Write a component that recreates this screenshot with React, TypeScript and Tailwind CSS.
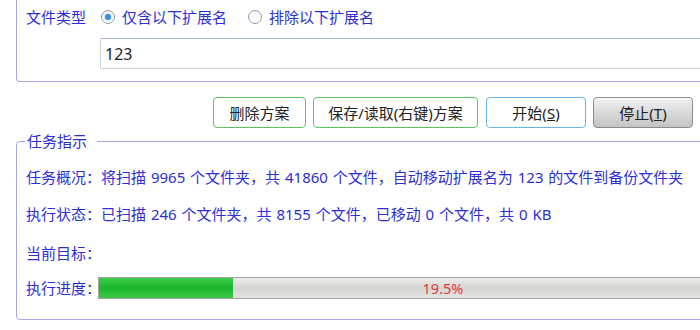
import React from 'react';

const font = { fontFamily: '"Noto Sans", "Noto Sans CJK SC", "Microsoft YaHei", sans-serif' };

type RadioProps = {
  label: string,
  checked?: boolean,
};

const Radio = ({ label, checked }: RadioProps) => (
  <label className="flex items-center gap-[7px] text-[#2e2ed6]">
    <span className="flex h-[14px] w-[14px] items-center justify-center rounded-full border border-[#8e9cad] bg-gradient-to-b from-[#f4f6f8] to-white">
      {checked && <span className="h-[6px] w-[6px] rounded-full bg-[#3c8fe0] shadow-[0_0_2px_#7ab8f0]" />}
    </span>
    {label}
  </label>
);

type ButtonProps = {
  children: React.ReactNode,
  className: string,
};

const Button = ({ children, className }: ButtonProps) => (
  <button type="button" className={`flex h-[31px] items-center justify-center rounded-[4px] border text-[15px] text-[#222] ${className}`}>
    {children}
  </button>
);

const Row = ({ children, className }: { children: React.ReactNode, className: string }) => (
  <div className={`flex h-[20px] items-center whitespace-nowrap pl-[9px] text-[#2e2ed6] [word-spacing:1px] ${className}`}>{children}</div>
);

const App = () => {
  const progress = 19.5;

  return (
    <div className="h-[330px] w-[700px] overflow-hidden bg-white text-[15px] leading-[20px]" style={font}>
      <div className="ml-4 h-[82px] w-[720px] rounded-b-[4px] border-x border-b border-[#a7a4ea]">
        <div className="flex h-[34px] items-center pl-[9px]">
          <span className="text-[#2e2ed6]">文件类型</span>
          <div className="ml-[15px] flex items-center gap-[21px]">
            <Radio label="仅含以下扩展名" checked />
            <Radio label="排除以下扩展名" />
          </div>
        </div>
        <div className="ml-[83px] mt-[4px] flex h-[31px] items-center rounded-[2px] border border-[#cdd2d9] border-t-[#a6b6cb] pl-[4px] text-[16px] text-[#222]">
          123
        </div>
      </div>

      <div className="ml-[213px] mt-[15px] flex">
        <Button className="w-[93px] border-[#5cc45c] bg-white">删除方案</Button>
        <Button className="ml-[7px] w-[165px] border-[#5cc45c] bg-white">保存/读取(右键)方案</Button>
        <Button className="ml-[8px] w-[100px] border-[#63b7e2] bg-white">
          开始(<span className="underline">S</span>)
        </Button>
        <Button className="ml-[7px] w-[100px] border-[#8c8c8c] bg-gradient-to-b from-[#f3f3f3] via-[#d9d9d9] to-[#c4c4c4] shadow-[inset_0_1px_0_#fff]">
          停止(<span className="underline">T</span>)
        </Button>
      </div>

      <fieldset className="ml-4 mt-[3px] w-[720px] rounded-[4px] border border-[#a7a4ea] pb-[20px]">
        <legend className="ml-[8px] px-[2px] pr-[10px] text-[#2e2ed6]">任务指示</legend>
        <Row className="mt-[16px]">任务概况：将扫描 9965 个文件夹，共 41860 个文件，自动移动扩展名为 123 的文件到备份文件夹</Row>
        <Row className="mt-[17px]">执行状态：已扫描 246 个文件夹，共 8155 个文件，已移动 0 个文件，共 0 KB</Row>
        <Row className="mt-[19px]">当前目标：</Row>
        <div className="mt-[14px] flex h-[22px] items-center pl-[9px] text-[#2e2ed6]">
          <span className="w-[72px] shrink-0 whitespace-nowrap">执行进度：</span>
          <div className="relative h-[22px] w-[690px] shrink-0 border border-[#a2a2a2] bg-gradient-to-b from-[#ececec] via-[#d5d5d3] to-[#e4e4e2]">
            <div
              className="h-full bg-gradient-to-b from-[#3ccf4a] via-[#17b52a] to-[#3dc84a]"
              style={{ width: `${progress}%` }}
            />
            <span className="absolute inset-0 flex items-center justify-center text-[14.5px] text-[#e43838]">{progress}%</span>
          </div>
        </div>
      </fieldset>
    </div>
  );
};

export default App;
